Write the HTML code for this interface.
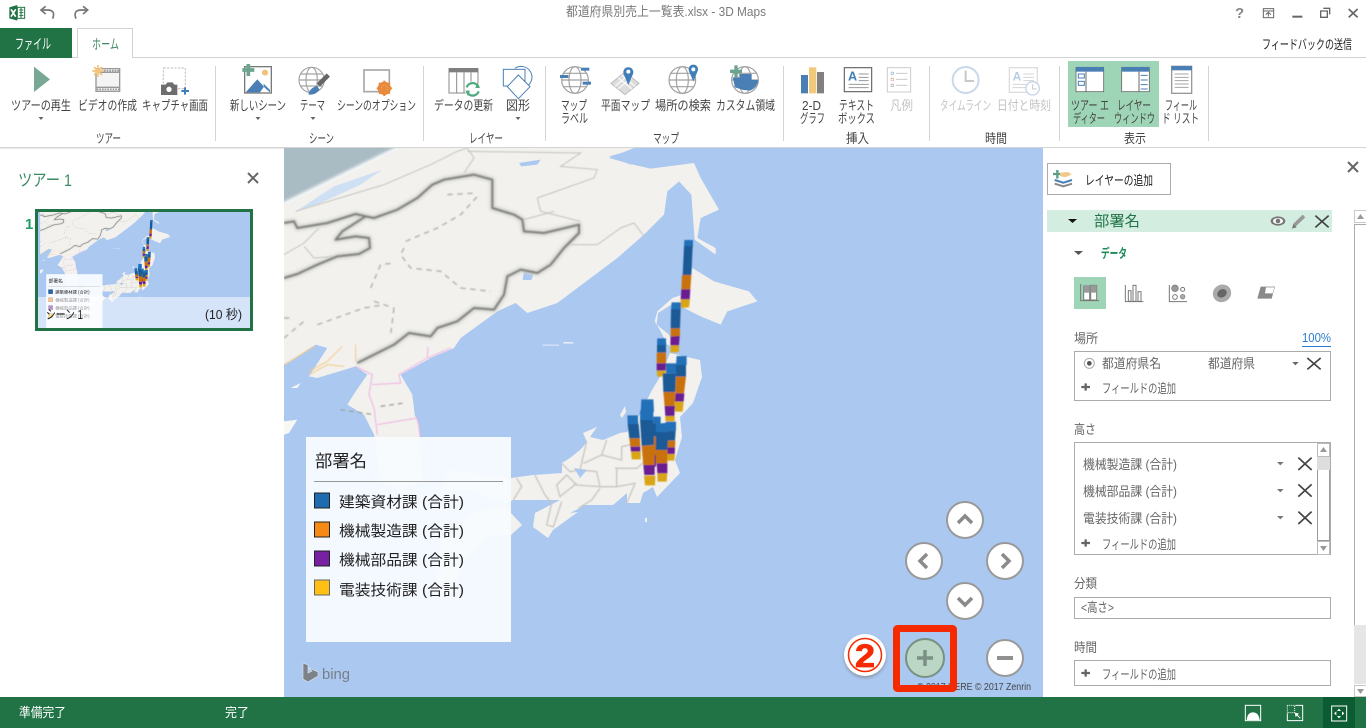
<!DOCTYPE html>
<html lang="ja">
<head>
<meta charset="utf-8">
<title>3D Maps</title>
<style>
html,body{margin:0;padding:0;width:1366px;height:728px;overflow:hidden;background:#fff}
svg{display:block;font-family:"Liberation Sans","Noto Sans CJK JP",sans-serif}
.r{font-size:13px;fill:#444}
.d{font-size:13px;fill:#c4c4c4}
.p{font-size:13px;fill:#666}
.w{font-size:13px;fill:#fff}
.k{font-size:13px;fill:#222}
.l{font-size:15px;fill:#222}
.x{fill:none;stroke:#444;stroke-width:5}
.cap{fill:#226fb8}.bl{fill:#1a5a96}.or{fill:#c9720f}.pu{fill:#6b1f90}.ye{fill:#d9a413}
.tri{fill:#666}
.ctl{fill:#fff;stroke:#999;stroke-width:2}
.arr{fill:none;stroke:#8a8a8a;stroke-width:3.500}
</style>
</head>
<body>
<svg width="1366" height="728" viewBox="0 0 1366 728" xmlns="http://www.w3.org/2000/svg">
<defs>
<clipPath id="mc" clipPathUnits="userSpaceOnUse"><rect x="284" y="148" width="759" height="549"/></clipPath>
<clipPath id="tc" clipPathUnits="userSpaceOnUse"><rect x="38" y="212" width="212" height="117"/></clipPath>
<filter id="b0" x="-5%" y="-5%" width="110%" height="110%"><feGaussianBlur stdDeviation="1.5"/></filter>
<filter id="b1" x="-5%" y="-5%" width="110%" height="110%"><feGaussianBlur stdDeviation="2.5"/></filter>
<filter id="b2" x="-5%" y="-5%" width="110%" height="110%"><feGaussianBlur stdDeviation="5"/></filter>
<filter id="sh" x="-30%" y="-30%" width="160%" height="160%"><feGaussianBlur stdDeviation="1.5"/></filter>
<g id="map">
<rect x="284" y="148" width="760" height="549" fill="#abc8f1"/>
<polygon points="284,148 402,148 284,206" fill="#a9bcc4"/>
<g transform="translate(284 148) scale(.33333)">
<path d="M-5,172 L350,-2" stroke="#fff" stroke-width="14" fill="none" filter="url(#b2)"/>
<path fill="#f2f1ed" d="M0,172 L350,0 L1050,0 L975,30 L1040,48 L1100,62 L1230,45 L1250,90 L1305,185 L1250,210 L1240,270 L1295,300 L1295,320 L1232,275 L1222,140 L1185,100 L1150,130 L1140,200 L1080,260 L1000,330 L880,420 L820,465 L730,495 L695,465 L640,490 L530,570 L510,600 L440,630 L350,680 L385,740 L392,800 L405,830 L415,1000 L350,1030 L290,1000 L270,860 L240,800 L190,770 L215,730 L250,680 L215,655 L100,690 L75,685 L130,600 L95,590 L20,640 L0,650 Z"/>
<path fill="#f2f1ed" d="M1225,360 L1290,400 L1395,430 L1420,460 L1330,490 L1310,530 L1250,505 L1200,480 L1170,465 L1122,495 L1118,530 L1155,560 L1170,600 L1150,590 L1130,550 L1112,520 L1120,490 L1165,450 L1195,440 Z"/>
<path fill="#cfe0f5" d="M35,190 L150,115 L295,65 L230,110 L110,165 Z"/>
<path fill="#abc8f1" d="M705,45 L770,35 L760,50 L712,55 Z M720,368 L752,368 L742,396 L716,396 Z"/>
<path fill="#abc8f1" d="M975,25 L1050,5 L1080,30 L1040,50 Z"/>
<path fill="#e4ecf6" d="M775,590 L825,590 L825,593 L775,593 Z M838,582 L868,582 L868,587 L838,587 Z"/>
<path fill="#f7f7f4" d="M20,720 L50,705 L40,720 Z M0,820 L40,815 L15,855 L0,860 Z"/>
<g fill="none" stroke="#c4c3bd" stroke-width="3" filter="url(#b0)">
<path d="M0,320 L60,285 L105,240 M35,190 L300,110 L440,50 L520,10 L550,0 M550,0 L570,30 L540,75 M550,10 L890,15 L830,55 L940,65 L930,90 L760,150 L770,190 L890,220 M810,190 L720,215 M850,290 L940,290 L1010,240 L1050,225 L1080,265 M60,295 L90,330 L150,325"/>
</g>
<g fill="none" stroke="#bcbcb7" stroke-width="5" stroke-dasharray="16 14" filter="url(#b0)">
<path d="M365,280 L460,240 L530,200 L585,140 M490,140 L580,135 M360,300 L350,320 L380,360 L470,370 L530,420 L620,430 M260,420 L290,350 L330,345 M0,570 L60,520 M330,480 L320,560 M100,530 L240,480 L300,470 M0,510 L30,510 M270,460 L330,480"/>
</g>
<g fill="none" stroke-linejoin="round">
<g stroke="#d2d2ce" stroke-width="16" filter="url(#b2)">
<path d="M0,390 L40,378 L100,350 L160,325 L225,318 L258,300 L255,270 L215,265 L155,275 L175,250 L245,205 L215,198 L130,225 L40,240 L30,220 L0,225"/>
<path d="M245,205 L270,210 L340,185 L400,150 L445,110 L480,95 L570,80 L625,95 L625,180 L690,200 L715,215 L720,250 L780,255 L885,230 L885,255 L840,300 L800,350 L760,375 L710,365 L670,385 L660,440 L630,485 L570,480 L520,520 L460,540 L440,565 L375,555 L330,590 L220,645"/>
</g>
<g stroke="#7e7e7c" stroke-width="6" filter="url(#b1)">
<path d="M0,390 L40,378 L100,350 L160,325 L225,318 L258,300 L255,270 L215,265 L155,275 L175,250 L245,205 L215,198 L130,225 L40,240 L30,220 L0,225"/>
<path d="M245,205 L270,210 L340,185 L400,150 L445,110 L480,95 L570,80 L625,95 L625,180 L690,200 L715,215 L720,250 L780,255 L885,230 L885,255 L840,300 L800,350 L760,375 L710,365 L670,385 L660,440 L630,485 L570,480 L520,520 L460,540 L440,565 L375,555 L330,590 L220,645"/>
</g>
</g>
<g fill="none" stroke="#efb0e4" stroke-width="3" filter="url(#b0)">
<path d="M215,655 L265,680 L255,740 L270,780 L280,860 M265,710 L350,705 L345,680 L430,630 L432,598 M432,630 L500,600 M280,830 L400,810 L410,870"/>
</g>
<g fill="none" stroke="#f6c988" stroke-width="3" filter="url(#b0)">
<path d="M0,650 L90,595 M75,680 L130,650 L180,655 M175,595 L130,640 L75,670 M215,590 L215,640"/>
</g>
<path fill="none" stroke="#a0a09e" stroke-width="4" stroke-dasharray="14 12" d="M290,775 L360,765 M170,785 L270,800" filter="url(#b0)"/>
</g>
<path fill="#f2f1ed" d="M670,353 L700,360 L702,377 L693,403 L680,417 L682,437 L675,460 L680,473 L657,497 L653,487 L643,493 L640,503 L627,503 L627,493 L613,505 L583,505 L580,508 L570,513 L578,512 L553,530 L548,538 L533,527 L535,513 L560,500 L513,500 L506,503 L470,490 L440,490 L450,470 L511,478 L533,475 L562,473 L562,463 L570,458 L580,450 L587,442 L583,433 L597,427 L590,437 L603,440 L620,433 L627,432 L637,420 L647,400 L652,390 L660,377 Z"/>
<path fill="#f2f1ed" d="M500,505 L511,513 L522,525 L511,535 L490,535 L465,560 L450,600 L435,590 L440,540 L470,515 Z"/>
<path fill="#f2f1ed" d="M620,415 L625,406 L626,412 L622,418 Z M645,518 L647,518 L647,522 L645,522 Z"/>
<g transform="translate(480 400) scale(.33333)" fill="none" stroke="#c8c6c1" stroke-width="4" filter="url(#b0)">
<path d="M100,300 L125,260 L110,235 M165,225 L195,285 L215,310 L200,375 L220,380 L245,305 M245,190 L270,215 L300,210 L320,125 M310,190 L365,165 L380,120 M300,210 L350,215 L360,260 L290,255 L260,225 L230,255 L240,290 L290,250 M360,260 L410,260 L465,250 L440,310 M405,205 L470,205 L500,180 M365,165 L425,180 L425,140 L470,130 M295,325 L335,300 L360,265 M410,260 L410,205"/>
</g>
<g fill="#abc8f1"><path d="M574,468 L587,470 L580,478 Z"/></g>
<g transform="translate(560 220) scale(.33333)" filter="url(#b0)">
<polygon class="cap" points="373,60 399,60 399,80 372,80"/><polygon class="bl" points="372,78 398,78 394,165 368,165"/><polygon class="or" points="366,165 394,165 391,208 364,208"/><polygon class="pu" points="364,208 391,208 389,238 362,238"/><polygon class="ye" points="362,238 390,238 387,262 363,264"/>
<polygon class="cap" points="335,247 363,247 362,270 333,270"/><polygon class="bl" points="333,268 362,268 360,325 332,325"/><polygon class="or" points="332,325 360,325 360,350 332,350"/><polygon class="pu" points="332,350 359,348 357,376 331,376"/><polygon class="ye" points="331,376 357,376 357,396 332,398"/>
<polygon class="cap" points="292,355 318,355 318,375 291,375"/><polygon class="bl" points="291,375 318,375 318,398 291,398"/><polygon class="or" points="290,398 318,398 318,430 290,430"/><polygon class="pu" points="290,430 318,430 317,452 290,452"/><polygon class="ye" points="290,452 317,452 317,470 292,470"/>
<polygon class="cap" points="350,408 380,408 380,435 348,435"/><polygon class="bl" points="348,435 378,435 378,470 348,470"/><polygon class="or" points="348,470 378,470 372,520 346,520"/><polygon class="pu" points="346,520 373,520 371,545 345,545"/><polygon class="ye" points="345,545 371,545 368,575 345,575"/>
<polygon class="cap" points="318,430 348,430 348,460 318,460"/><polygon class="bl" points="308,460 348,460 346,516 310,516"/><polygon class="or" points="310,516 346,516 344,560 314,560"/><polygon class="pu" points="314,558 345,558 343,588 316,588"/><polygon class="ye" points="316,588 344,588 344,604 316,604"/>
<polygon class="cap" points="244,538 280,538 282,575 242,575"/>
<polygon class="cap" points="202,586 233,586 235,612 203,612"/><polygon class="bl" points="203,612 236,612 240,655 208,655"/><polygon class="or" points="208,655 240,655 241,680 211,680"/><polygon class="pu" points="211,680 241,680 241,695 213,695"/><polygon class="ye" points="213,695 242,695 242,718 215,718"/>
<polygon class="cap" points="280,590 302,590 302,615 280,615"/><polygon class="bl" points="278,612 300,612 296,650 278,650"/><polygon class="or" points="278,650 292,650 288,705 280,705"/><polygon class="pu" points="280,705 290,705 288,740 282,740"/>
<polygon class="cap" points="240,572 280,572 280,600 240,600"/><polygon class="bl" points="240,600 280,600 282,675 245,678"/><polygon class="or" points="245,678 284,675 284,735 250,735"/><polygon class="pu" points="250,735 284,735 284,765 253,765"/><polygon class="ye" points="252,767 286,767 285,796 255,796"/>
<polygon class="cap" points="318,605 348,605 348,632 318,632"/><polygon class="bl" points="322,632 347,632 345,662 322,662"/><polygon class="or" points="322,662 346,662 345,682 322,682"/><polygon class="pu" points="322,682 345,682 344,702 322,702"/><polygon class="ye" points="320,702 345,702 343,722 322,722"/>
<polygon class="cap" points="288,612 322,608 325,640 288,640"/><polygon class="bl" points="288,636 325,636 322,690 287,690"/><polygon class="or" points="287,690 322,690 322,730 288,730"/><polygon class="pu" points="290,730 322,730 322,760 292,760"/><polygon class="ye" points="292,760 322,760 320,785 293,785"/>
</g>
<rect x="306" y="437" width="205" height="205" fill="#f8fbff" fill-opacity=".95"/>
<text class="l" style="font-size:17px" x="315" y="467" textLength="52" lengthAdjust="spacingAndGlyphs">部署名</text>
<rect x="314" y="481" width="189" height="1" fill="#999"/>
<rect x="314.500" y="493" width="15" height="15" fill="#1f6bb0" stroke="#222"/>
<rect x="314.500" y="522" width="15" height="15" fill="#f78a14" stroke="#222"/>
<rect x="314.500" y="551" width="15" height="15" fill="#7720a4" stroke="#222"/>
<rect x="314.500" y="580" width="15" height="15" fill="#ffbf14" stroke="#666"/>
<text class="l" x="339" y="507" textLength="125" lengthAdjust="spacingAndGlyphs">建築資材課 (合計)</text>
<text class="l" x="339" y="536" textLength="125" lengthAdjust="spacingAndGlyphs">機械製造課 (合計)</text>
<text class="l" x="339" y="565" textLength="125" lengthAdjust="spacingAndGlyphs">機械部品課 (合計)</text>
<text class="l" x="339" y="595" textLength="125" lengthAdjust="spacingAndGlyphs">電装技術課 (合計)</text>
<path d="M303,663 L308,665 L308,673 L312,671 L309,668 L318,672 L318,676 L308,682 L303,679 Z" fill="#7d8288" stroke="#dfe6ee" stroke-width=".6"/>
<text x="322" y="679" style="font-size:15px" fill="#777f88" textLength="28" lengthAdjust="spacingAndGlyphs">bing</text>
</g>
</defs>

<!-- title bar -->
<g transform="scale(.33333)">
<polygon points="28,22 52,15 52,62 28,55" fill="#217346"/>
<rect x="52" y="22" width="22" height="33" fill="#fff" stroke="#217346" stroke-width="3"/>
<path d="M58,30 H70 M58,38 H70 M58,46 H70 M63,24 V54" stroke="#217346" stroke-width="3" fill="none"/>
<path d="M33,28 L47,50 M47,28 L33,50" stroke="#fff" stroke-width="5" fill="none"/>
<path d="M158,56 Q168,30 142,30 L125,30 M137,19 L123,30 L137,42" stroke="#777" stroke-width="5" fill="none"/>
<path d="M228,56 Q218,30 244,30 L261,30 M249,19 L263,30 L249,42" stroke="#777" stroke-width="5" fill="none"/>
</g>
<text x="566" y="16" style="font-size:13px" fill="#7a7a7a" textLength="200" lengthAdjust="spacingAndGlyphs">都道府県別売上一覧表.xlsx - 3D Maps</text>
<text x="1235" y="18" style="font-size:15px;font-weight:bold" fill="#888">?</text>
<g transform="translate(900 0) scale(.33333)">
<rect x="1090" y="26" width="31" height="27" fill="none" stroke="#666" stroke-width="3"/>
<path d="M1090,33 H1121 M1105,50 V38 M1097,44 L1105,37 L1113,44" fill="none" stroke="#666" stroke-width="3"/>
<rect x="1177" y="47" width="30" height="6" fill="#666"/>
<path d="M1270,25 H1289 V43 M1262,33 H1282 V52 H1262 Z" fill="none" stroke="#666" stroke-width="4"/>
<path d="M1346,27 L1373,52 M1373,27 L1346,52" fill="none" stroke="#666" stroke-width="5"/>
</g>

<!-- tabs -->
<rect x="0" y="57" width="1366" height="1" fill="#d2d2d2"/>
<rect x="0" y="28" width="72" height="30" fill="#217346"/>
<text class="w" style="font-size:14px" x="15" y="49" textLength="36" lengthAdjust="spacingAndGlyphs">ファイル</text>
<path d="M77.500,58 V28.500 H132.500 V58" fill="#fff" stroke="#d2d2d2"/>
<rect x="78" y="56" width="54" height="3" fill="#fff"/>
<text x="92" y="49" style="font-size:13.500px" fill="#3d8560" textLength="27" lengthAdjust="spacingAndGlyphs">ホーム</text>
<text class="k" x="1262" y="49" textLength="90" lengthAdjust="spacingAndGlyphs">フィードバックの送信</text>

<!-- ribbon -->
<rect x="0" y="147" width="1366" height="1.500" fill="#d4d4d4"/>
<g fill="#d4d4d4">
<rect x="215" y="66" width="1" height="75"/><rect x="423" y="66" width="1" height="75"/><rect x="545" y="66" width="1" height="75"/><rect x="783" y="66" width="1" height="75"/><rect x="929" y="66" width="1" height="75"/><rect x="1059" y="66" width="1" height="75"/><rect x="1208" y="66" width="1" height="75"/>
</g>
<rect x="1068" y="61" width="91" height="66" fill="#9fd5b7"/>

<g transform="scale(.33333)">
<polygon points="102,200 150,238 102,276" fill="#78a796"/>
<rect x="288" y="206" width="71" height="68" fill="#f4f4f4" stroke="#999" stroke-width="4"/>
<path d="M288,217 H359 M288,262 H359" stroke="#999" stroke-width="4"/>
<path d="M312,212 H357 M290,268 H357" stroke="#999" stroke-width="5" stroke-dasharray="5 3"/>
<path d="M294,195 V231 M277,213 H312 M282,201 L306,225 M306,201 L282,225" stroke="#f6c37b" stroke-width="5"/>
<rect x="490" y="204" width="66" height="62" fill="none" stroke="#bdbdbd" stroke-width="3" stroke-dasharray="7 4"/>
<path d="M483,254 H497 L502,247 H518 L523,254 H532 V285 H483 Z" fill="#6d6d6d"/>
<circle cx="507" cy="268" r="9" fill="#fff" stroke="#6d6d6d" stroke-width="2"/>
<path d="M555,262 V284 M544,273 H567" stroke="#3f7dbb" stroke-width="6"/>
<rect x="734" y="200" width="80" height="79" fill="#fff" stroke="#7a7a7a" stroke-width="4"/>
<polygon points="737,277 772,238 792,260 780,277" fill="#4a7fb5"/>
<polygon points="790,250 810,270 810,277 793,262" fill="#4a7fb5"/>
<circle cx="795" cy="218" r="9" fill="#f3c079"/>
<path d="M745,192 V228 M727,210 H763" stroke="#6ba58f" stroke-width="11"/>
<g fill="none" stroke="#a5a5a5" stroke-width="3.500">
<circle cx="935" cy="240" r="38" fill="#fff"/><ellipse cx="935" cy="240" rx="17" ry="38"/><path d="M897,240 H973 M902,222 H968 M902,258 H968"/>
</g>
<path d="M985,225 L955,255" stroke="#666" stroke-width="14"/>
<path d="M952,258 Q930,262 925,284 Q950,285 958,268 Z" fill="#4a7fb5"/>
<rect x="1092" y="210" width="76" height="65" fill="#fff" stroke="#a8a8a8" stroke-width="5"/>
<circle cx="1153" cy="265" r="15" fill="none" stroke="#e88a3c" stroke-width="10"/>
<path d="M1153,242 V288 M1130,265 H1176 M1137,249 L1169,281 M1169,249 L1137,281" stroke="#e88a3c" stroke-width="6"/>
</g>
<g transform="translate(450 0) scale(.33333)">
<rect x="-3" y="206" width="87" height="73" fill="#fff" stroke="#8a8a8a" stroke-width="3"/>
<rect x="-3" y="204" width="87" height="13" fill="#7f7f7f"/>
<path d="M20,217 V279 M42,217 V279 M63,217 V279" stroke="#8a8a8a" stroke-width="3"/>
<circle cx="68" cy="268" r="24" fill="#fff"/>
<path d="M50,262 A19,19 0 0 1 85,260 M86,274 A19,19 0 0 1 51,276" fill="none" stroke="#4faa7d" stroke-width="7"/>
<path d="M82,248 L90,264 L76,264 Z M54,288 L46,272 L60,272 Z" fill="#4faa7d"/>
<rect x="160" y="208" width="65" height="50" fill="#fff" stroke="#4a7fb5" stroke-width="3"/>
<path d="M195,205 A32,32 0 1 1 232,258" fill="none" stroke="#4a7fb5" stroke-width="3"/>
<polygon points="205,225 240,260 205,296 172,260" fill="#fff" stroke="#4a7fb5" stroke-width="3"/>
<g fill="none" stroke="#a0a0a0" stroke-width="3.500">
<circle cx="375" cy="240" r="40" fill="#fff"/><ellipse cx="375" cy="240" rx="18" ry="40"/><path d="M335,240 H415 M341,220 H409 M341,260 H409"/>
<circle cx="697" cy="240" r="40" fill="#fff"/><ellipse cx="697" cy="240" rx="18" ry="40"/><path d="M657,240 H737 M663,220 H731 M663,260 H731"/>
<circle cx="885" cy="240" r="40" fill="#fff"/><ellipse cx="885" cy="240" rx="18" ry="40"/><path d="M845,240 H925 M851,220 H919 M851,260 H919"/>
</g>
<g fill="#4a7fb5"><rect x="330" y="225" width="25" height="9"/><rect x="393" y="203" width="25" height="9"/><rect x="398" y="245" width="25" height="9"/></g>
<path d="M525,216 L567,250 L525,284 L483,250 Z" fill="#ddd" stroke="#bbb" stroke-width="3"/>
<path d="M504,233 L546,267 M546,233 L504,267 M514,225 L556,259 M536,225 L494,259" stroke="#fff" stroke-width="3"/>
<path d="M535,255 L521,222 A15,15 0 1 1 549,222 Z" fill="#3f7dbb"/><circle cx="535" cy="215" r="6" fill="#fff"/>
<path d="M730,245 L717,213 A14,14 0 1 1 743,213 Z" fill="#3f7dbb"/><circle cx="730" cy="208" r="6" fill="#fff"/>
<path d="M848,232 H870 V222 H905 V240 H925 A40,40 0 0 1 900,272 L880,270 L855,262 Z" fill="#4a7fb5"/>
<path d="M858,196 V232 M840,214 H876" stroke="#6ba58f" stroke-width="10"/>
<rect x="1053" y="225" width="21" height="55" fill="#4a7fb5"/><rect x="1077" y="202" width="22" height="78" fill="#f0c97d"/><rect x="1101" y="216" width="21" height="64" fill="#808080"/>
<rect x="1183" y="203" width="82" height="72" fill="#fff" stroke="#666" stroke-width="3.500"/>
<text x="1194" y="242" style="font-size:38px;font-weight:bold" fill="#3f7dbb">A</text>
<path d="M1226,222 H1256 M1226,232 H1256 M1226,242 H1256 M1196,253 H1256 M1196,263 H1256" stroke="#9a9a9a" stroke-width="3"/>
<rect x="1312" y="203" width="70" height="73" fill="#fff" stroke="#ccc" stroke-width="3"/>
<circle cx="1327" cy="220" r="4" fill="none" stroke="#8fb0d4" stroke-width="2"/><circle cx="1327" cy="238" r="4" fill="none" stroke="#e5a58c" stroke-width="2"/><circle cx="1327" cy="256" r="4" fill="none" stroke="#aaa" stroke-width="2"/>
<path d="M1338,220 H1372 M1338,238 H1372 M1338,256 H1372" stroke="#ccc" stroke-width="3"/>
</g>
<g transform="translate(900 0) scale(.33333)">
<circle cx="197" cy="240" r="39" fill="#fff" stroke="#c9d9ea" stroke-width="6"/>
<path d="M197,212 V243 H222" fill="none" stroke="#c8c8c8" stroke-width="6"/>
<rect x="328" y="203" width="84" height="74" fill="#fff" stroke="#ddd" stroke-width="4"/>
<text x="338" y="242" style="font-size:36px;font-weight:bold" fill="#b7cde6">A</text>
<path d="M370,222 H402 M370,232 H402 M370,242 H402 M338,253 H385 M338,263 H385" stroke="#d4d4d4" stroke-width="3"/>
<circle cx="398" cy="265" r="20" fill="#fff" stroke="#c3d6ea" stroke-width="4"/><path d="M398,252 V267 H410" fill="none" stroke="#c8c8c8" stroke-width="3"/>
<rect x="528" y="202" width="83" height="73" fill="#fff" stroke="#6a6a6a" stroke-width="2.500"/><rect x="528" y="201" width="83" height="14" fill="#4a7fb5"/><path d="M558,215 V275" stroke="#6a6a6a" stroke-width="3"/>
<rect x="535" y="222" width="18" height="12" fill="none" stroke="#4a7fb5" stroke-width="3"/><rect x="535" y="244" width="18" height="12" fill="none" stroke="#4a7fb5" stroke-width="3"/>
<rect x="665" y="202" width="83" height="73" fill="#fff" stroke="#6a6a6a" stroke-width="2.500"/><rect x="665" y="201" width="83" height="14" fill="#4a7fb5"/><path d="M717,215 V275" stroke="#6a6a6a" stroke-width="3"/>
<path d="M722,226 H743 M722,240 H743 M722,254 H743 M722,267 H743" stroke="#4a7fb5" stroke-width="3"/>
<rect x="815" y="199" width="60" height="81" fill="#fff" stroke="#999" stroke-width="4"/><rect x="814" y="198" width="62" height="13" fill="#4a7fb5"/>
<path d="M824,222 H866 M824,232 H866 M824,242 H866 M824,252 H866 M824,262 H866" stroke="#a5a5a5" stroke-width="3"/>
</g>

<g>
<text class="r" x="11" y="110" textLength="60" lengthAdjust="spacingAndGlyphs">ツアーの再生</text>
<text class="r" x="78" y="110" textLength="59" lengthAdjust="spacingAndGlyphs">ビデオの作成</text>
<text class="r" x="142" y="110" textLength="66" lengthAdjust="spacingAndGlyphs">キャプチャ画面</text>
<text class="r" x="230" y="110" textLength="56" lengthAdjust="spacingAndGlyphs">新しいシーン</text>
<text class="r" x="300" y="110" textLength="25" lengthAdjust="spacingAndGlyphs">テーマ</text>
<text class="r" x="337" y="110" textLength="79" lengthAdjust="spacingAndGlyphs">シーンのオプション</text>
<text class="r" x="434" y="110" textLength="59" lengthAdjust="spacingAndGlyphs">データの更新</text>
<text class="r" x="506" y="110" textLength="24" lengthAdjust="spacingAndGlyphs">図形</text>
<text class="r" x="561" y="110" textLength="26" lengthAdjust="spacingAndGlyphs">マップ</text>
<text class="r" x="561" y="123" textLength="27" lengthAdjust="spacingAndGlyphs">ラベル</text>
<text class="r" x="601" y="110" textLength="49" lengthAdjust="spacingAndGlyphs">平面マップ</text>
<text class="r" x="655" y="110" textLength="56" lengthAdjust="spacingAndGlyphs">場所の検索</text>
<text class="r" x="716" y="110" textLength="59" lengthAdjust="spacingAndGlyphs">カスタム領域</text>
<text class="r" x="802" y="110" textLength="19" lengthAdjust="spacingAndGlyphs">2-D</text>
<text class="r" x="800" y="123" textLength="25" lengthAdjust="spacingAndGlyphs">グラフ</text>
<text class="r" x="839" y="110" textLength="35" lengthAdjust="spacingAndGlyphs">テキスト</text>
<text class="r" x="838" y="123" textLength="37" lengthAdjust="spacingAndGlyphs">ボックス</text>
<text class="d" x="890" y="110" textLength="23" lengthAdjust="spacingAndGlyphs">凡例</text>
<text class="d" x="940" y="110" textLength="51" lengthAdjust="spacingAndGlyphs">タイムライン</text>
<text class="d" x="997" y="110" textLength="54" lengthAdjust="spacingAndGlyphs">日付と時刻</text>
<text class="r" x="1071" y="110" textLength="38" lengthAdjust="spacingAndGlyphs">ツアー エ</text>
<text class="r" x="1073" y="123" textLength="32" lengthAdjust="spacingAndGlyphs">ディター</text>
<text class="r" x="1117" y="110" textLength="34" lengthAdjust="spacingAndGlyphs">レイヤー</text>
<text class="r" x="1114" y="123" textLength="41" lengthAdjust="spacingAndGlyphs">ウィンドウ</text>
<text class="r" x="1165" y="110" textLength="32" lengthAdjust="spacingAndGlyphs">フィール</text>
<text class="r" x="1162" y="123" textLength="37" lengthAdjust="spacingAndGlyphs">ド リスト</text>
<text class="r" x="96" y="143" textLength="25" lengthAdjust="spacingAndGlyphs">ツアー</text>
<text class="r" x="309" y="143" textLength="25" lengthAdjust="spacingAndGlyphs">シーン</text>
<text class="r" x="469" y="143" textLength="34" lengthAdjust="spacingAndGlyphs">レイヤー</text>
<text class="r" x="653" y="143" textLength="26" lengthAdjust="spacingAndGlyphs">マップ</text>
<text class="r" x="846" y="143" textLength="23" lengthAdjust="spacingAndGlyphs">挿入</text>
<text class="r" x="985" y="143" textLength="22" lengthAdjust="spacingAndGlyphs">時間</text>
<text class="r" x="1124" y="143" textLength="22" lengthAdjust="spacingAndGlyphs">表示</text>
</g>
<g class="tri">
<polygon points="38.500,117 43.500,117 41,120"/><polygon points="255.500,117 260.500,117 258,120"/><polygon points="310.500,117 315.500,117 313,120"/><polygon points="515.500,117 520.500,117 518,120"/>
</g>

<!-- map -->
<g clip-path="url(#mc)"><use href="#map"/></g>

<!-- map controls -->
<circle class="ctl" cx="965" cy="520" r="18"/><path class="arr" d="M958,523 L965,516 L972,523"/>
<circle class="ctl" cx="924" cy="561" r="18"/><path class="arr" d="M927,554 L920,561 L927,568"/>
<circle class="ctl" cx="1005" cy="561" r="18"/><path class="arr" d="M1002,554 L1009,561 L1002,568"/>
<circle class="ctl" cx="965" cy="601" r="18"/><path class="arr" d="M958,598 L965,605 L972,598"/>
<text x="917" y="690" style="font-size:10px" fill="#444" textLength="114" lengthAdjust="spacingAndGlyphs">© 2017 HERE  © 2017 Zenrin</text>
<circle cx="925" cy="658" r="19" fill="#bcd6c5" stroke="#78907f" stroke-width="2"/>
<path d="M925,650 V666 M917,658 H933" stroke="#7a9084" stroke-width="3.500" fill="none"/>
<circle class="ctl" cx="1005" cy="658" r="18"/><rect x="997" y="656" width="16" height="4" fill="#909090"/>
<rect x="896.500" y="628.500" width="57" height="60" fill="none" stroke="#f52a00" stroke-width="7" rx="1"/>
<circle cx="865" cy="657" r="21" fill="#8a97a8" filter="url(#sh)"/>
<circle cx="865" cy="655" r="21" fill="#fff"/>
<circle cx="865" cy="655" r="16.500" fill="#fff" stroke="#f52a00" stroke-width="1.500"/>
<text x="855" y="667" style="font-size:32px;font-weight:bold" fill="#f52a00" stroke="#f52a00" stroke-width=".8" textLength="20" lengthAdjust="spacingAndGlyphs">2</text>

<!-- left panel -->
<text x="18" y="186" style="font-size:17px" fill="#3a8a63" textLength="54" lengthAdjust="spacingAndGlyphs">ツアー 1</text>
<path d="M248,173 L258,183 M258,173 L248,183" stroke="#666" stroke-width="2" fill="none"/>
<text x="25" y="229" style="font-size:15px;font-weight:bold" fill="#1f9d63">1</text>
<rect x="36.500" y="210.500" width="215" height="119" fill="#abc8f1"/>
<g clip-path="url(#tc)"><use href="#map" transform="translate(-38 154) scale(.275)"/></g>
<rect x="38" y="297" width="212" height="32" fill="#fff" fill-opacity=".5"/>
<rect x="36.500" y="210.500" width="215" height="119" fill="none" stroke="#217346" stroke-width="3"/>
<text class="k" x="46" y="319" style="font-size:13px" textLength="37" lengthAdjust="spacingAndGlyphs">シーン 1</text>
<text class="k" x="205" y="319" style="font-size:13px" textLength="37" lengthAdjust="spacingAndGlyphs">(10 秒)</text>

<!-- right panel -->
<rect x="1043" y="148" width="323" height="549" fill="#fff"/>
<path d="M1348,162 L1358,172 M1358,162 L1348,172" stroke="#666" stroke-width="2" fill="none"/>
<rect x="1047.500" y="163.500" width="123" height="31" fill="#fff" stroke="#ababab"/>
<text class="k" x="1085" y="185" textLength="68" lengthAdjust="spacingAndGlyphs">レイヤーの追加</text>
<rect x="1047" y="210" width="285" height="22" fill="#d3eee0"/>
<text x="1094" y="226" style="font-size:15px" fill="#217346" textLength="46" lengthAdjust="spacingAndGlyphs">部署名</text>
<polygon points="1068,219 1077,219 1072.500,223" fill="#111"/>
<text x="1101" y="258" style="font-size:13px;font-weight:bold" fill="#1b8a56" textLength="26" lengthAdjust="spacingAndGlyphs">データ</text>
<polygon points="1074,251 1083,251 1078.500,255" fill="#555"/>
<rect x="1074" y="277" width="32" height="32" fill="#9fd5b7"/>
<g transform="translate(1040 150) scale(.33333)">
<path d="M52,60 V86 M39,72 H65" stroke="#5a9e86" stroke-width="7"/>
<polygon points="60,68 85,66 95,74 75,82 60,78" fill="#f3c98a"/>
<path d="M44,90 L70,98 L96,90" stroke="#4a7fb5" stroke-width="6" fill="none"/>
<path d="M44,101 L70,109 L96,101" stroke="#888" stroke-width="6" fill="none"/>
<ellipse cx="714" cy="213" rx="22" ry="14" fill="#777"/><ellipse cx="714" cy="213" rx="15" ry="9" fill="#fff"/><circle cx="714" cy="213" r="7" fill="#777"/>
<path d="M763,226 L792,198" stroke="#999" stroke-width="11"/><polygon points="756,236 760,222 770,232" fill="#777"/>
<path class="x" d="M826,197 L866,232 M866,197 L826,232"/>
<path d="M122,402 V452 H177" fill="none" stroke="#777" stroke-width="3"/>
<rect x="131" y="408" width="18" height="42" fill="#fff" stroke="#777" stroke-width="3"/><rect x="131" y="408" width="18" height="20" fill="#999"/>
<rect x="152" y="406" width="18" height="44" fill="#fff" stroke="#777" stroke-width="3"/><rect x="152" y="406" width="18" height="22" fill="#999"/>
<path d="M256,405 V455 H310" fill="none" stroke="#777" stroke-width="3"/>
<rect x="265" y="422" width="8" height="32" fill="#fff" stroke="#777" stroke-width="3"/><rect x="279" y="406" width="9" height="48" fill="#fff" stroke="#777" stroke-width="3"/><rect x="294" y="425" width="9" height="29" fill="#fff" stroke="#777" stroke-width="3"/>
<path d="M388,405 V455 H441" fill="none" stroke="#777" stroke-width="3"/>
<circle cx="405" cy="415" r="10" fill="#999" stroke="#777" stroke-width="2"/><circle cx="428" cy="418" r="6" fill="#fff" stroke="#777" stroke-width="3"/><circle cx="405" cy="441" r="7" fill="#fff" stroke="#777" stroke-width="3"/><circle cx="428" cy="440" r="7" fill="#aaa" stroke="#777" stroke-width="2"/>
<ellipse cx="546" cy="430" rx="28" ry="26" fill="#aaa" transform="rotate(-30 546 430)"/><ellipse cx="546" cy="430" rx="15" ry="12" fill="#666" transform="rotate(-30 546 430)"/>
<polygon points="662,410 705,410 695,446 652,446" fill="#8a8a8a"/><polygon points="678,412 703,412 698,430 675,430" fill="#fff"/>
</g>
<text class="p" x="1074" y="343" textLength="24" lengthAdjust="spacingAndGlyphs">場所</text>
<text x="1302" y="342" style="font-size:12.500px" fill="#2b7cd3" textLength="29" lengthAdjust="spacingAndGlyphs">100%</text>
<rect x="1302" y="346" width="29" height="1" fill="#2b7cd3"/>
<rect x="1074.500" y="351.500" width="256" height="49" fill="#fff" stroke="#ababab"/>
<g transform="translate(1040 150) scale(.33333)">
<circle cx="148" cy="640" r="15" fill="#fff" stroke="#aaa" stroke-width="3"/><circle cx="148" cy="640" r="7" fill="#555"/>
<polygon points="757,636 776,636 766,646" fill="#666"/>
<path class="x" d="M802,624 L842,658 M842,624 L802,658"/>
<path d="M137,700 V722 M124,711 H150" stroke="#666" stroke-width="7"/>
</g>
<text class="p" x="1102" y="368" textLength="59" lengthAdjust="spacingAndGlyphs">都道府県名</text>
<text class="p" x="1208" y="368" textLength="47" lengthAdjust="spacingAndGlyphs">都道府県</text>
<text class="p" x="1102" y="393" textLength="74" lengthAdjust="spacingAndGlyphs">フィールドの追加</text>

<text class="p" x="1074" y="434" textLength="22" lengthAdjust="spacingAndGlyphs">高さ</text>
<rect x="1074.500" y="442.500" width="256" height="112" fill="#fff" stroke="#ababab"/>
<rect x="1317.500" y="443.500" width="12" height="13" fill="#fff" stroke="#bbb"/>
<polygon points="1320,452 1327,452 1323.500,447" fill="#999"/>
<rect x="1317.500" y="457.500" width="12" height="83" fill="#fff" stroke="#999"/>
<rect x="1317" y="457" width="13" height="13" fill="#ddd"/>
<rect x="1317.500" y="541.500" width="12" height="13" fill="#fff" stroke="#bbb"/>
<polygon points="1320,546 1327,546 1323.500,551" fill="#999"/>
<text class="p" x="1083" y="469" textLength="94" lengthAdjust="spacingAndGlyphs">機械製造課 (合計)</text>
<text class="p" x="1083" y="496" textLength="94" lengthAdjust="spacingAndGlyphs">機械部品課 (合計)</text>
<text class="p" x="1083" y="523" textLength="94" lengthAdjust="spacingAndGlyphs">電装技術課 (合計)</text>
<g transform="translate(1040 420) scale(.33333)">
<polygon points="711,126 731,126 721,136" fill="#777"/><polygon points="711,207 731,207 721,217" fill="#777"/><polygon points="711,288 731,288 721,298" fill="#777"/>
<path class="x" d="M775,113 L815,150 M815,113 L775,150 M775,193 L815,230 M815,193 L775,230 M775,275 L815,312 M815,275 L775,312"/>
<path d="M137,358 V380 M124,369 H150" stroke="#666" stroke-width="7"/>
</g>
<text class="p" x="1102" y="549" textLength="74" lengthAdjust="spacingAndGlyphs">フィールドの追加</text>
<text class="p" x="1074" y="588" textLength="23" lengthAdjust="spacingAndGlyphs">分類</text>
<rect x="1074.500" y="597.500" width="256" height="21" fill="#fff" stroke="#ababab"/>
<text class="p" x="1081" y="612" textLength="33" lengthAdjust="spacingAndGlyphs">&lt;高さ&gt;</text>
<text class="p" x="1074" y="652" textLength="23" lengthAdjust="spacingAndGlyphs">時間</text>
<rect x="1074.500" y="660.500" width="256" height="25" fill="#fff" stroke="#ababab"/>
<g transform="translate(1040 420) scale(.33333)"><path d="M137,748 V770 M124,759 H150" stroke="#666" stroke-width="7"/></g>
<text class="p" x="1102" y="679" textLength="74" lengthAdjust="spacingAndGlyphs">フィールドの追加</text>

<!-- outer scrollbar -->
<rect x="1354.500" y="224.500" width="13" height="401" fill="#fff" stroke="#ababab"/>
<rect x="1354" y="625" width="12" height="59" fill="#e6e6e6"/>
<rect x="1354.500" y="210.500" width="13" height="12" fill="#fff" stroke="#c8c8c8"/>
<polygon points="1357,219 1364,219 1360.500,214" fill="#999"/>
<rect x="1354.500" y="685.500" width="13" height="11" fill="#fff" stroke="#c8c8c8"/>
<polygon points="1357,689 1364,689 1360.500,694" fill="#999"/>

<!-- status bar -->
<rect x="0" y="697" width="1366" height="31" fill="#217346"/>
<text class="w" x="19" y="717" textLength="47" lengthAdjust="spacingAndGlyphs">準備完了</text>
<text class="w" x="225" y="717" textLength="24" lengthAdjust="spacingAndGlyphs">完了</text>
<g transform="translate(1040 420) scale(.33333)">
<rect x="616" y="856" width="46" height="46" fill="none" stroke="#fff" stroke-width="3"/>
<path d="M620,900 Q622,877 639,877 Q656,877 659,900 Z" fill="#fff"/>
<path d="M742,880 V902 H788 V856 H766" fill="none" stroke="#fff" stroke-width="3"/>
<rect x="742" y="856" width="22" height="22" fill="none" stroke="#fff" stroke-width="3" stroke-dasharray="3 3"/>
<path d="M781,895 L768,882" stroke="#fff" stroke-width="3"/><path d="M764,878 L777,881 L767,891 Z" fill="#fff"/>
<rect x="849" y="831" width="96" height="93" fill="#0c5c33"/>
<rect x="875" y="858" width="45" height="45" fill="none" stroke="#fff" stroke-width="3"/>
<path d="M897,866 L903,873 H891 Z M897,895 L903,888 H891 Z M882,880 L889,874 V886 Z M913,880 L906,874 V886 Z" fill="#fff"/>
</g>
</svg>
</body>
</html>
